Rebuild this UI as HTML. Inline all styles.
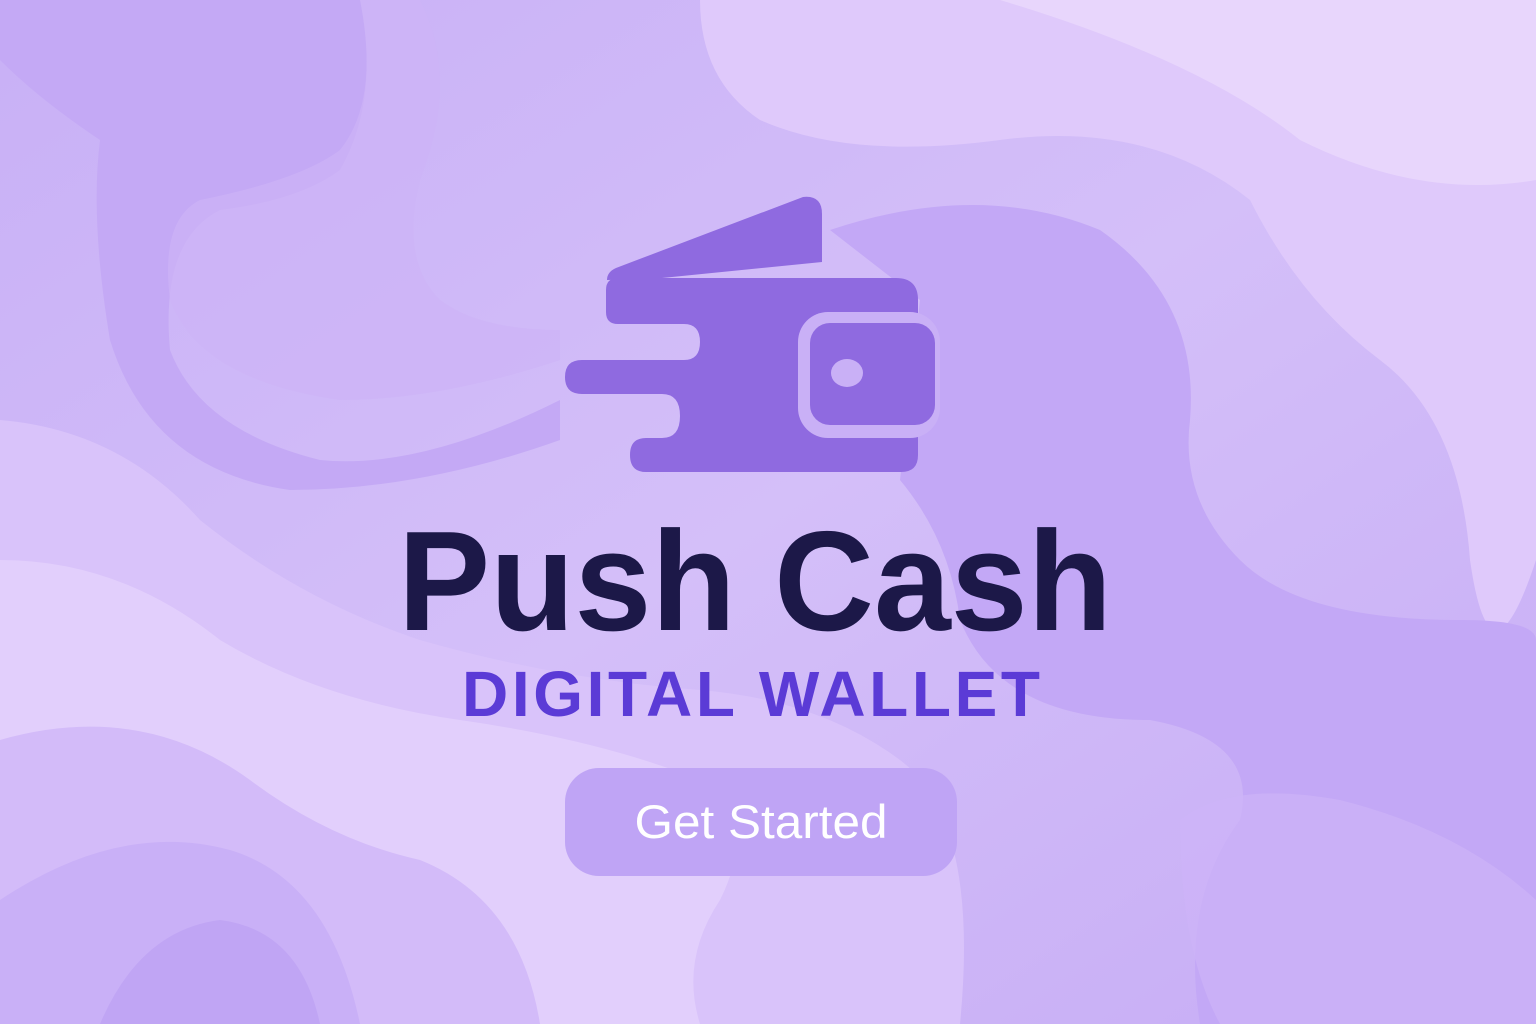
<!DOCTYPE html>
<html><head><meta charset="utf-8"><style>
html,body{margin:0;padding:0;width:1536px;height:1024px;overflow:hidden;background:#d3bdf8}
svg{display:block}
</style></head><body>
<svg width="1536" height="1024" viewBox="0 0 1536 1024" xmlns="http://www.w3.org/2000/svg">
<defs>
<linearGradient id="bg" x1="0" y1="0" x2="1" y2="1">
<stop offset="0" stop-color="#c8b0f6"/><stop offset="0.5" stop-color="#d4bff9"/><stop offset="1" stop-color="#c6acf5"/>
</linearGradient>
</defs>
<rect width="1536" height="1024" fill="url(#bg)"/>
<!-- top right light region -->
<path d="M700 0 H1536 V560 Q1490 700 1470 560 Q1460 420 1380 360 Q1300 300 1250 200 Q1150 120 1000 140 Q850 160 760 120 Q700 80 700 0Z" fill="#dfc9fb"/>
<path d="M1000 0 H1536 V180 Q1420 200 1300 140 Q1200 60 1000 0Z" fill="#e8d6fc"/>
<!-- top left darker -->
<path d="M0 0 H360 Q380 100 340 170 Q300 200 220 210 Q160 240 170 350 Q200 430 320 460 Q420 470 560 400 L560 440 Q420 490 290 490 Q150 470 110 340 Q90 220 100 140 Q40 100 0 60Z" fill="#c4a9f5"/>
<path d="M0 0 H420 Q460 80 420 180 Q400 260 440 300 Q480 330 560 330 L560 360 Q440 400 340 400 Q200 380 170 300 Q160 220 200 200 Q300 180 340 150 Q380 100 360 0" fill="#cdb4f7" opacity="0.7"/>
<!-- middle right blob -->
<path d="M830 230 Q980 180 1100 230 Q1200 300 1190 420 Q1180 500 1240 560 Q1300 620 1460 620 Q1536 620 1536 640 V1024 H1200 Q1180 900 1240 820 Q1260 740 1150 720 Q1000 720 960 620 Q950 540 900 480 L920 300Z" fill="#c3a8f6"/>
<!-- bottom left lighter waves -->
<path d="M0 420 Q120 430 200 520 Q300 600 420 640 Q560 680 700 690 Q820 700 900 760 Q980 820 960 1024 H0Z" fill="#d9c3fa"/>
<path d="M0 560 Q120 560 220 640 Q320 700 460 720 Q600 740 700 780 Q760 820 720 900 Q680 960 700 1024 H0Z" fill="#e2cffc"/>
<path d="M0 740 Q140 700 250 780 Q330 840 420 860 Q520 900 540 1024 H0Z" fill="#d3bbf9"/>
<path d="M0 900 Q120 820 230 850 Q330 880 360 1024 H0Z" fill="#c9b0f7"/>
<path d="M100 1024 Q140 930 220 920 Q300 930 320 1024Z" fill="#c0a5f4"/>
<!-- bottom right -->
<path d="M1180 820 Q1230 780 1340 800 Q1460 830 1536 900 V1024 H1220 Q1180 950 1180 820Z" fill="#cdb4f8" opacity="0.7"/>

<!-- wallet icon -->
<path d="M652 279 L822 262 V214 Q822 195 803 197 L616 268 Q607 272 607 280 Z" fill="#8f6ae0"/>
<path d="M606 290 Q606 278 618 278 H896 Q918 278 918 300 V455 Q918 472 901 472 H646 Q630 472 630 455 Q630 438 646 438 H662 Q680 438 680 416 Q680 394 662 394 H582 Q565 394 565 377 Q565 360 582 360 H684 Q700 360 700 342 Q700 324 684 324 H618 Q606 324 606 312 Z" fill="#8f6ae0"/>
<rect x="798" y="312" width="142" height="126" rx="30" fill="#c9b0f6"/>
<rect x="810" y="323" width="125" height="102" rx="20" fill="#8f6ae0"/>
<ellipse cx="847" cy="373" rx="16" ry="14" fill="#c9b0f6"/>

<text x="755" y="630" text-anchor="middle" font-family="Liberation Sans, sans-serif" font-weight="bold" font-size="142" fill="#1c1848" textLength="714" lengthAdjust="spacingAndGlyphs">Push Cash</text>
<text x="751" y="716" text-anchor="middle" font-family="Liberation Sans, sans-serif" font-weight="bold" font-size="64" fill="#5b3bd6" textLength="578" lengthAdjust="spacing">DIGITAL WALLET</text>

<rect x="565" y="768" width="392" height="108" rx="34" fill="#bfa4f5"/>
<text x="761" y="838" text-anchor="middle" font-family="Liberation Sans, sans-serif" font-size="47" fill="#ffffff" textLength="253" lengthAdjust="spacingAndGlyphs">Get Started</text>
</svg>
</body></html>
